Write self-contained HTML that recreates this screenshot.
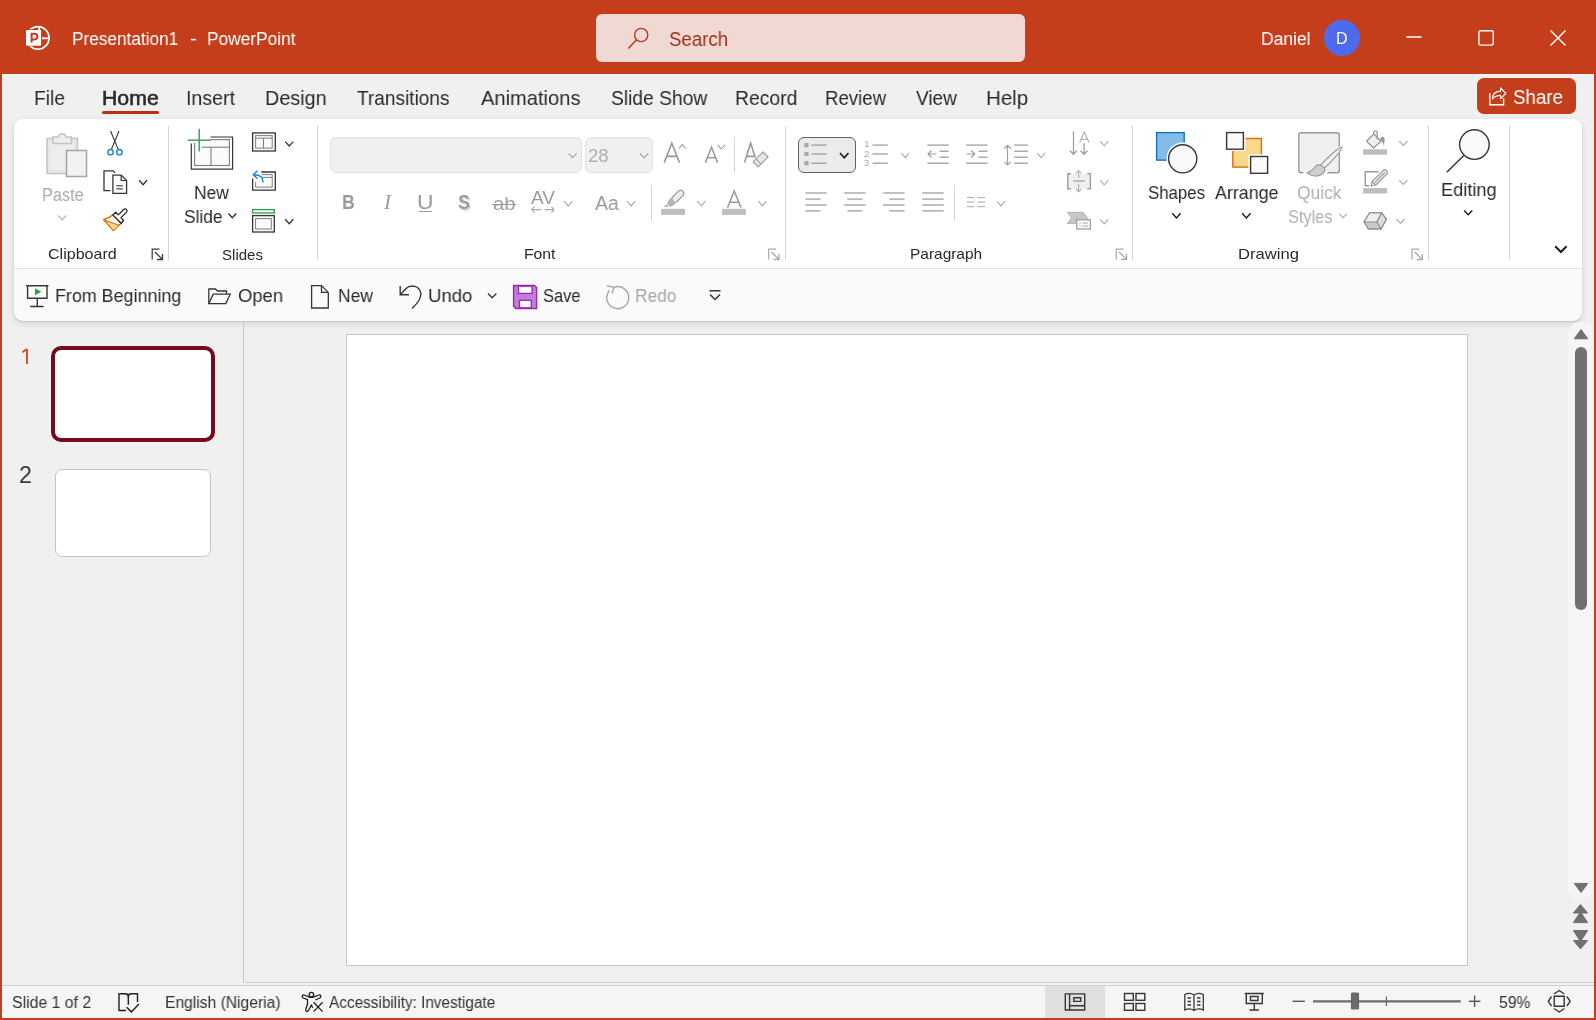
<!DOCTYPE html>
<html><head><meta charset="utf-8"><style>
html,body{margin:0;padding:0}
body{width:1596px;height:1020px;overflow:hidden;position:relative;font-family:"Liberation Sans",sans-serif;background:#f0f0f0}
.t{position:absolute;white-space:nowrap;line-height:1;transform-origin:0 0;will-change:transform}
svg{position:absolute;left:0;top:0}
</style></head><body>
<div style="position:absolute;left:0px;top:0px;width:1596px;height:74px;background:#c43e1c"></div>
<div style="position:absolute;left:0px;top:74px;width:1596px;height:946px;background:#f0f0f0"></div>
<div style="position:absolute;left:2px;top:74px;width:1591px;height:1px;background:#f6f6f6"></div>
<div style="position:absolute;left:14px;top:119px;width:1568px;height:202px;background:#fafafa;border-radius:9px;box-shadow:0 1px 2px rgba(0,0,0,0.14),0 3px 9px rgba(0,0,0,0.10)"></div>
<div style="position:absolute;left:14px;top:119px;width:1568px;height:149px;background:#fff;border-radius:9px 9px 0 0"></div>
<div style="position:absolute;left:14px;top:268px;width:1568px;height:1px;background:#e0e0e0"></div>
<div style="position:absolute;left:243px;top:323px;width:1px;height:660px;background:#c8c8c8"></div>
<div style="position:absolute;left:246px;top:982px;width:1348px;height:1px;background:#c8c8c8"></div>
<div style="position:absolute;left:2px;top:983px;width:1592px;height:2px;background:#f2f2f2"></div>
<div style="position:absolute;left:2px;top:986px;width:1592px;height:32px;background:#f5f5f5"></div>
<div style="position:absolute;left:2px;top:985px;width:1592px;height:1px;background:#d0d0d0"></div>
<div style="position:absolute;left:0px;top:74px;width:2px;height:946px;background:#c43e1c"></div>
<div style="position:absolute;left:1594px;top:74px;width:2px;height:946px;background:#c43e1c"></div>
<div style="position:absolute;left:0px;top:1018px;width:1596px;height:2px;background:#c43e1c"></div>
<div style="position:absolute;left:346px;top:334px;width:1122px;height:632px;background:#fff;box-sizing:border-box;border:1px solid #c6c6c6"></div>
<div style="position:absolute;left:51px;top:346px;width:164px;height:96px;background:#fff;box-sizing:border-box;border:4px solid #750b1c;border-radius:10px"></div>
<div style="position:absolute;left:55px;top:469px;width:156px;height:88px;background:#fff;box-sizing:border-box;border:1px solid #c4c4c4;border-radius:7px"></div>
<div style="position:absolute;left:1568px;top:322px;width:25px;height:578px;background:#f5f5f5;border-radius:12px"></div>
<div style="position:absolute;left:1575px;top:347px;width:12px;height:263px;background:#707070;border-radius:6px"></div>
<div style="position:absolute;left:596px;top:14px;width:429px;height:48px;background:#f0d9d3;border-radius:6px"></div>
<div style="position:absolute;left:1477px;top:78px;width:99px;height:36px;background:#c43e1c;border-radius:7px"></div>
<div style="position:absolute;left:1324px;top:20px;width:36px;height:36px;background:#4f6bed;border-radius:50%"></div>
<div style="position:absolute;left:102px;top:111px;width:57px;height:3px;background:#b7300f;border-radius:2px"></div>
<div style="position:absolute;left:1045px;top:986px;width:60px;height:32px;background:#e0e0e0"></div>
<div style="position:absolute;left:330px;top:137px;width:252px;height:36px;background:#f0f0f0;box-sizing:border-box;border:1px solid #e2e2e2;border-radius:6px"></div>
<div style="position:absolute;left:585px;top:137px;width:68px;height:36px;background:#f0f0f0;box-sizing:border-box;border:1px solid #e2e2e2;border-radius:6px"></div>
<div style="position:absolute;left:798px;top:137px;width:58px;height:36px;background:#ebebeb;box-sizing:border-box;border:1px solid #616161;border-radius:6px"></div>
<div style="position:absolute;left:168px;top:126px;width:1px;height:134px;background:#d4d4d4"></div>
<div style="position:absolute;left:317px;top:126px;width:1px;height:134px;background:#d4d4d4"></div>
<div style="position:absolute;left:785px;top:126px;width:1px;height:134px;background:#d4d4d4"></div>
<div style="position:absolute;left:1132px;top:126px;width:1px;height:134px;background:#d4d4d4"></div>
<div style="position:absolute;left:1428px;top:126px;width:1px;height:134px;background:#d4d4d4"></div>
<div style="position:absolute;left:1509px;top:126px;width:1px;height:134px;background:#d4d4d4"></div>
<div style="position:absolute;left:734px;top:137px;width:1px;height:36px;background:#d4d4d4"></div>
<div style="position:absolute;left:651px;top:185px;width:1px;height:36px;background:#d4d4d4"></div>
<div style="position:absolute;left:954px;top:185px;width:1px;height:36px;background:#d4d4d4"></div>
<svg width="1596" height="1020" viewBox="0 0 1596 1020"><circle cx="37.9" cy="37.9" r="11.2" fill="none" stroke="#fff" stroke-width="1.7"/><rect x="25.3" y="29.3" width="16.6" height="17" fill="#c43e1c"/><line x1="39.2" y1="26.5" x2="39.2" y2="31" stroke="#fff" stroke-width="1.8"/><line x1="42" y1="38.3" x2="49.3" y2="38.3" stroke="#fff" stroke-width="1.8"/><rect x="26" y="30" width="15.1" height="15.7" rx="0.8" fill="#fff"/><path d="M31.6 42.6 V33.8 H34.6 A2.8 2.8 0 0 1 34.6 39.4 H31.6" fill="none" stroke="#c43e1c" stroke-width="2"/><circle cx="641.2" cy="35" r="6.6" fill="none" stroke="#b83b1c" stroke-width="1.4"/><line x1="636.5" y1="39.8" x2="628.3" y2="48.5" stroke="#b83b1c" stroke-width="1.5" stroke-linecap="butt"/><line x1="1406" y1="37" x2="1421.6" y2="37" stroke="#fff" stroke-width="1.5" stroke-linecap="butt"/><rect x="1478.9" y="30.7" width="14.399999999999864" height="14.400000000000002" rx="2" fill="none" stroke="#fff" stroke-width="1.4"/><line x1="1550.5" y1="30.5" x2="1565.5" y2="45.5" stroke="#fff" stroke-width="1.4" stroke-linecap="butt"/><line x1="1565.5" y1="30.5" x2="1550.5" y2="45.5" stroke="#fff" stroke-width="1.4" stroke-linecap="butt"/><path d="M1489.8 93.3 V104.8 H1503.6 V98.2" fill="none" stroke="#fff" stroke-width="1.4"/><path d="M1492.3 98.8 C1492.8 93.5 1496 91.2 1500.6 91.2 V87.9 L1505.8 93.3 L1500.6 98.7 V95.4 C1497 95.4 1494.5 96.5 1492.3 98.8 Z" fill="none" stroke="#fff" stroke-width="1.2" stroke-linejoin="round"/><rect x="47" y="138.5" width="30.5" height="35" fill="#eeeeee" stroke="#c4c4c4" stroke-width="1.6"/><rect x="49.5" y="141" width="25.5" height="30" fill="none" stroke="#e0e0e0" stroke-width="1.2"/><path d="M53 143.5 V137 H58.5 A3.8 3.8 0 0 1 66 137 H71.5 V143.5 Z" fill="#efefef" stroke="#c4c4c4" stroke-width="1.5"/><rect x="66.5" y="150.5" width="20" height="26" fill="#f2f2f2" stroke="#a4a4a4" stroke-width="1.5"/><path d="M58.2 215.5 L62.2 219.8 L66.2 215.5" fill="none" stroke="#b8b8b8" stroke-width="1.2"/><path d="M110.6 131 L118.3 149.6 M119 131 L111.3 149.6" fill="none" stroke="#363636" stroke-width="1.1"/><circle cx="110.5" cy="152.2" r="2.7" fill="none" stroke="#1a86d0" stroke-width="1.4"/><circle cx="119.4" cy="152.2" r="2.7" fill="none" stroke="#1a86d0" stroke-width="1.4"/><path d="M110.5 190.6 H104 V170.9 H113 L115 172.8" fill="none" stroke="#363636" stroke-width="1.3"/><path d="M112.9 193.4 V175.1 H121.2 L126.6 180.5 V193.4 Z" fill="#fafafa" stroke="#363636" stroke-width="1.3"/><path d="M121.2 175.1 V180.5 H126.6" fill="none" stroke="#363636" stroke-width="1.2"/><line x1="116.4" y1="185.8" x2="122.8" y2="185.8" stroke="#363636" stroke-width="1.1" stroke-linecap="butt"/><line x1="116.4" y1="188.8" x2="122.8" y2="188.8" stroke="#363636" stroke-width="1.1" stroke-linecap="butt"/><path d="M139.2 180.3 L143.1 184.6 L147 180.3" fill="none" stroke="#363636" stroke-width="1.4"/><path d="M103.6 219.5 C107.2 218.6 110.5 217 112.9 214.9 L121.1 223.2 L113.4 230.6 Z" fill="#fff" stroke="#e06c00" stroke-width="1.4" stroke-linejoin="round"/><path d="M106.5 221.4 L118.6 225.6 L113.6 229.8 Z" fill="#f8d98b"/><path d="M104.2 220 L119.6 225.5" fill="none" stroke="#e06c00" stroke-width="1.3"/><path d="M112.9 214.9 L115.6 212.3 L118.3 214.9 L123.6 209.5 C124.6 208.6 125.8 208.8 126.5 209.6 C127.2 210.4 127.3 211.5 126.4 212.4 L121 217.6 L123.6 220.5 L121.1 223.2 Z" fill="#fff" stroke="#262626" stroke-width="1.3" stroke-linejoin="round"/><path d="M152.2 259.5 V249.2 H159.5" fill="none" stroke="#3a3a3a" stroke-width="1.2"/><path d="M155.0 252.0 L162.5 259.5 M162.5 254.0 V259.5 H157.0" fill="none" stroke="#3a3a3a" stroke-width="1.3"/><rect x="194.6" y="139.6" width="34.8" height="25.9" fill="#fafafa" stroke="#7d7d7d" stroke-width="1.1"/><path d="M210.5 137 H232.6 V169.1 H191.3 V143.4" fill="none" stroke="#363636" stroke-width="1.2"/><line x1="202" y1="147.2" x2="229.4" y2="147.2" stroke="#7d7d7d" stroke-width="1.1" stroke-linecap="butt"/><line x1="211" y1="147.2" x2="211" y2="165.5" stroke="#7d7d7d" stroke-width="1.1" stroke-linecap="butt"/><rect x="187" y="127" width="23" height="16" fill="#fff"/><rect x="196.8" y="142" width="4.8" height="11" fill="#fff"/><line x1="199.2" y1="128.8" x2="199.2" y2="151.6" stroke="#2f9e4f" stroke-width="1.4" stroke-linecap="butt"/><line x1="187.9" y1="140.2" x2="210.7" y2="140.2" stroke="#2f9e4f" stroke-width="1.4" stroke-linecap="butt"/><path d="M228.4 213.5 L232.3 217.8 L236.2 213.5" fill="none" stroke="#363636" stroke-width="1.4"/><rect x="252.6" y="132.9" width="22.700000000000017" height="18.099999999999994" rx="0" fill="#fafafa" stroke="#363636" stroke-width="1.3"/><rect x="255.6" y="135.6" width="16.599999999999994" height="12.5" rx="0" fill="none" stroke="#7d7d7d" stroke-width="1.0"/><line x1="255.6" y1="138.2" x2="272.2" y2="138.2" stroke="#7d7d7d" stroke-width="1.0" stroke-linecap="butt"/><line x1="263.5" y1="138.2" x2="263.5" y2="148.1" stroke="#7d7d7d" stroke-width="1.0" stroke-linecap="butt"/><path d="M285.2 141.6 L289.25 146 L293.3 141.6" fill="none" stroke="#363636" stroke-width="1.4"/><path d="M261.2 172 H275.3 V190.2 H252.6 V178.5" fill="#fafafa" stroke="#363636" stroke-width="1.3"/><path d="M262 174.6 H272.2 V187.1 H255.6 V182" fill="none" stroke="#7d7d7d" stroke-width="1.0"/><line x1="262" y1="177.4" x2="272.2" y2="177.4" stroke="#7d7d7d" stroke-width="1.0" stroke-linecap="butt"/><path d="M262.8 182.5 C263.5 177 260 174.7 253.5 174.7 M257.5 170.7 L253.3 174.7 L257.5 178.7" fill="none" stroke="#1a86d0" stroke-width="1.4"/><rect x="252.6" y="209.6" width="21.700000000000017" height="3.4000000000000057" rx="0" fill="#fff" stroke="#2f9e4f" stroke-width="1.3"/><rect x="252.6" y="215.6" width="21.700000000000017" height="16.400000000000006" rx="0" fill="#fafafa" stroke="#363636" stroke-width="1.3"/><rect x="255.6" y="218.6" width="15.700000000000017" height="10.400000000000006" rx="0" fill="none" stroke="#7d7d7d" stroke-width="1.0"/><path d="M285.2 219.2 L289.25 223.6 L293.3 219.2" fill="none" stroke="#363636" stroke-width="1.4"/><path d="M568.6 153.4 L572.6 157.6 L576.6 153.4" fill="none" stroke="#a0a0a0" stroke-width="1.1"/><path d="M640 153.5 L644.15 157.8 L648.3 153.5" fill="none" stroke="#a0a0a0" stroke-width="1.1"/><path d="M664.2 162.6 L671.85 143.2 L679.5 162.6 M666.648 156.392 H677.052" fill="none" stroke="#9a9a9a" stroke-width="1.6"/><path d="M679 148.5 L682.35 144.7 L685.7 148.5" fill="none" stroke="#9a9a9a" stroke-width="1.1"/><path d="M705.4 162.6 L711.5 147.3 L717.6 162.6 M707.352 157.704 H715.648" fill="none" stroke="#9a9a9a" stroke-width="1.6"/><path d="M717.6 144.9 L721.3 148.8 L725 144.9" fill="none" stroke="#9a9a9a" stroke-width="1.1"/><path d="M744.5 162.6 L750.65 143.2 L756.8 162.6 M746.468 156.392 H754.832" fill="none" stroke="#9a9a9a" stroke-width="1.6"/><g transform="translate(760.6 159.3) rotate(-45)"><rect x="-8.5" y="-5" width="17" height="10" fill="#fff"/><rect x="-7" y="-3.6" width="14" height="7.2" fill="#e6e6e6" stroke="#a0a0a0" stroke-width="1.2"/><line x1="-3" y1="-3.6" x2="-3" y2="3.6" stroke="#a0a0a0" stroke-width="1.2"/></g><path d="M531.5 209.6 H541 M531.5 209.6 L534.5 206.6 M531.5 209.6 L534.5 212.6 M544.5 209.6 H554.3 M554.3 209.6 L551.3 206.6 M554.3 209.6 L551.3 212.6" fill="none" stroke="#a8a8a8" stroke-width="1.2"/><path d="M564 201 L568.25 205.8 L572.5 201" fill="none" stroke="#a0a0a0" stroke-width="1.1"/><path d="M627 201 L631.2 205.8 L635.4 201" fill="none" stroke="#a0a0a0" stroke-width="1.1"/><rect x="661.2" y="208.8" width="23.8" height="6.1" fill="#bdbdbd"/><g transform="translate(675 199) rotate(-45)"><rect x="-3" y="-3.2" width="14" height="6.4" rx="3" fill="#ececec" stroke="#9a9a9a" stroke-width="1.2"/><path d="M-3 -3.2 L-8 -2 L-8 2 L-3 3.2" fill="#b8b8b8" stroke="#9a9a9a" stroke-width="1"/></g><path d="M663 207.5 L667 204 L669.5 206.5 Z" fill="#b8b8b8"/><path d="M697 201 L701.3 205.8 L705.6 201" fill="none" stroke="#a0a0a0" stroke-width="1.1"/><path d="M727.5 207.6 L734.25 191 L741 207.6 M729.66 202.288 H738.84" fill="none" stroke="#9a9a9a" stroke-width="1.5"/><rect x="722.1" y="208.8" width="23.8" height="6.1" fill="#bdbdbd"/><path d="M758.2 201 L762.35 205.8 L766.5 201" fill="none" stroke="#a0a0a0" stroke-width="1.1"/><path d="M768.7 259.5 V249.2 H776" fill="none" stroke="#a8a8a8" stroke-width="1.2"/><path d="M771.5 252.0 L779 259.5 M779 254.0 V259.5 H773.5" fill="none" stroke="#a8a8a8" stroke-width="1.3"/><rect x="804.3" y="143.0" width="4.3" height="4.3" fill="#a8a8a8"/><line x1="811.3" y1="145.1" x2="826.6" y2="145.1" stroke="#9e9e9e" stroke-width="1.3" stroke-linecap="butt"/><rect x="804.3" y="151.9" width="4.3" height="4.3" fill="#a8a8a8"/><line x1="811.3" y1="154" x2="826.6" y2="154" stroke="#9e9e9e" stroke-width="1.3" stroke-linecap="butt"/><rect x="804.3" y="161.1" width="4.3" height="4.3" fill="#a8a8a8"/><line x1="811.3" y1="163.2" x2="826.6" y2="163.2" stroke="#9e9e9e" stroke-width="1.3" stroke-linecap="butt"/><path d="M840 153 L844.25 157.8 L848.5 153" fill="none" stroke="#1a1a1a" stroke-width="1.6"/><line x1="872.5" y1="145.1" x2="887.7" y2="145.1" stroke="#9e9e9e" stroke-width="1.3" stroke-linecap="butt"/><line x1="872.5" y1="154" x2="887.7" y2="154" stroke="#9e9e9e" stroke-width="1.3" stroke-linecap="butt"/><line x1="872.5" y1="163.2" x2="887.7" y2="163.2" stroke="#9e9e9e" stroke-width="1.3" stroke-linecap="butt"/><path d="M901.2 153 L905.2 157.6 L909.2 153" fill="none" stroke="#a8a8a8" stroke-width="1.1"/><line x1="927.3" y1="145.1" x2="948.7" y2="145.1" stroke="#9e9e9e" stroke-width="1.3" stroke-linecap="butt"/><line x1="927.3" y1="163.2" x2="948.7" y2="163.2" stroke="#9e9e9e" stroke-width="1.3" stroke-linecap="butt"/><line x1="939.6" y1="151.2" x2="948.7" y2="151.2" stroke="#9e9e9e" stroke-width="1.3" stroke-linecap="butt"/><line x1="939.6" y1="157.2" x2="948.7" y2="157.2" stroke="#9e9e9e" stroke-width="1.3" stroke-linecap="butt"/><line x1="966.2" y1="145.1" x2="987.5" y2="145.1" stroke="#9e9e9e" stroke-width="1.3" stroke-linecap="butt"/><line x1="966.2" y1="163.2" x2="987.5" y2="163.2" stroke="#9e9e9e" stroke-width="1.3" stroke-linecap="butt"/><line x1="978.4" y1="151.2" x2="987.5" y2="151.2" stroke="#9e9e9e" stroke-width="1.3" stroke-linecap="butt"/><line x1="978.4" y1="157.2" x2="987.5" y2="157.2" stroke="#9e9e9e" stroke-width="1.3" stroke-linecap="butt"/><path d="M936.4 154 H928 M931.5 150.5 L928 154 L931.5 157.5" fill="none" stroke="#9e9e9e" stroke-width="1.2"/><path d="M966.5 154 H974.8 M971.3 150.5 L974.8 154 L971.3 157.5" fill="none" stroke="#9e9e9e" stroke-width="1.2"/><path d="M1007.5 145.3 V165 M1004.3 148.5 L1007.5 145.3 L1010.7 148.5 M1004.3 161.8 L1007.5 165 L1010.7 161.8" fill="none" stroke="#9e9e9e" stroke-width="1.2"/><line x1="1014.2" y1="145.1" x2="1027.9" y2="145.1" stroke="#9e9e9e" stroke-width="1.3" stroke-linecap="butt"/><line x1="1014.2" y1="151.2" x2="1027.9" y2="151.2" stroke="#9e9e9e" stroke-width="1.3" stroke-linecap="butt"/><line x1="1014.2" y1="157.2" x2="1027.9" y2="157.2" stroke="#9e9e9e" stroke-width="1.3" stroke-linecap="butt"/><line x1="1014.2" y1="163.2" x2="1027.9" y2="163.2" stroke="#9e9e9e" stroke-width="1.3" stroke-linecap="butt"/><path d="M1037 153 L1041.0 157.6 L1045 153" fill="none" stroke="#a8a8a8" stroke-width="1.1"/><line x1="805.4" y1="193" x2="826.6" y2="193" stroke="#9e9e9e" stroke-width="1.3" stroke-linecap="butt"/><line x1="844.2" y1="193" x2="865.6" y2="193" stroke="#9e9e9e" stroke-width="1.3" stroke-linecap="butt"/><line x1="883.2" y1="193" x2="904.6" y2="193" stroke="#9e9e9e" stroke-width="1.3" stroke-linecap="butt"/><line x1="922.3" y1="193" x2="943.6" y2="193" stroke="#9e9e9e" stroke-width="1.3" stroke-linecap="butt"/><line x1="805.4" y1="199.1" x2="820.6" y2="199.1" stroke="#9e9e9e" stroke-width="1.3" stroke-linecap="butt"/><line x1="847.4" y1="199.1" x2="862.4" y2="199.1" stroke="#9e9e9e" stroke-width="1.3" stroke-linecap="butt"/><line x1="889.2" y1="199.1" x2="904.6" y2="199.1" stroke="#9e9e9e" stroke-width="1.3" stroke-linecap="butt"/><line x1="922.3" y1="199.1" x2="943.6" y2="199.1" stroke="#9e9e9e" stroke-width="1.3" stroke-linecap="butt"/><line x1="805.4" y1="205" x2="826.6" y2="205" stroke="#9e9e9e" stroke-width="1.3" stroke-linecap="butt"/><line x1="844.2" y1="205" x2="865.6" y2="205" stroke="#9e9e9e" stroke-width="1.3" stroke-linecap="butt"/><line x1="883.2" y1="205" x2="904.6" y2="205" stroke="#9e9e9e" stroke-width="1.3" stroke-linecap="butt"/><line x1="922.3" y1="205" x2="943.6" y2="205" stroke="#9e9e9e" stroke-width="1.3" stroke-linecap="butt"/><line x1="805.4" y1="210.9" x2="820.6" y2="210.9" stroke="#9e9e9e" stroke-width="1.3" stroke-linecap="butt"/><line x1="847.4" y1="210.9" x2="862.4" y2="210.9" stroke="#9e9e9e" stroke-width="1.3" stroke-linecap="butt"/><line x1="889.2" y1="210.9" x2="904.6" y2="210.9" stroke="#9e9e9e" stroke-width="1.3" stroke-linecap="butt"/><line x1="922.3" y1="210.9" x2="943.6" y2="210.9" stroke="#9e9e9e" stroke-width="1.3" stroke-linecap="butt"/><line x1="967" y1="197.5" x2="974.2" y2="197.5" stroke="#b5b5b5" stroke-width="1.2" stroke-linecap="butt"/><line x1="977.4" y1="197.5" x2="985.1" y2="197.5" stroke="#b5b5b5" stroke-width="1.2" stroke-linecap="butt"/><line x1="967" y1="202" x2="974.2" y2="202" stroke="#b5b5b5" stroke-width="1.2" stroke-linecap="butt"/><line x1="977.4" y1="202" x2="985.1" y2="202" stroke="#b5b5b5" stroke-width="1.2" stroke-linecap="butt"/><line x1="967" y1="206.6" x2="974.2" y2="206.6" stroke="#b5b5b5" stroke-width="1.2" stroke-linecap="butt"/><line x1="977.4" y1="206.6" x2="985.1" y2="206.6" stroke="#b5b5b5" stroke-width="1.2" stroke-linecap="butt"/><path d="M997 201.2 L1001.0 205.8 L1005 201.2" fill="none" stroke="#a8a8a8" stroke-width="1.1"/><path d="M1073.5 131.2 V154.3 M1070 150.8 L1073.5 154.3 L1077 150.8 M1084.1 143.2 V154.3 M1080.6 150.8 L1084.1 154.3 L1087.6 150.8" fill="none" stroke="#9e9e9e" stroke-width="1.3"/><path d="M1079.6 142.6 L1084.3 132 L1089 142.6 M1081.1039999999998 139.208 H1087.496" fill="none" stroke="#a8a8a8" stroke-width="1.1"/><path d="M1100.3 141.4 L1104.25 145.8 L1108.2 141.4" fill="none" stroke="#a8a8a8" stroke-width="1.1"/><rect x="1067.8" y="173.8" width="22.6" height="15" fill="#efefef"/><path d="M1071 173.8 H1067.8 V188.7 H1071 M1087.2 173.8 H1090.4 V188.7 H1087.2" fill="none" stroke="#9e9e9e" stroke-width="1.4"/><line x1="1073.1" y1="181" x2="1084.9" y2="181" stroke="#9e9e9e" stroke-width="1.2" stroke-linecap="butt"/><path d="M1078.6 170.5 V178 M1075.8 173.3 L1078.6 170.5 L1081.4 173.3 M1078.6 184 V191.7 M1075.8 188.9 L1078.6 191.7 L1081.4 188.9" fill="none" stroke="#b0b0b0" stroke-width="1.1"/><path d="M1100.3 180.3 L1104.25 185 L1108.2 180.3" fill="none" stroke="#a8a8a8" stroke-width="1.1"/><path d="M1067.3 212.3 H1083 L1088.6 219.5 H1076.3 V223.4 H1067.3 L1071.5 217.8 Z" fill="#c6c6c6" stroke="#a8a8a8" stroke-width="0.8"/><rect x="1076.8" y="219.8" width="13.600000000000136" height="9.199999999999989" rx="0" fill="#fafafa" stroke="#a0a0a0" stroke-width="1.3"/><line x1="1079.5" y1="223" x2="1080.8" y2="223" stroke="#a8a8a8" stroke-width="1.0" stroke-linecap="butt"/><line x1="1082.5" y1="223" x2="1088" y2="223" stroke="#a8a8a8" stroke-width="1.0" stroke-linecap="butt"/><line x1="1079.5" y1="226" x2="1080.8" y2="226" stroke="#a8a8a8" stroke-width="1.0" stroke-linecap="butt"/><line x1="1082.5" y1="226" x2="1088" y2="226" stroke="#a8a8a8" stroke-width="1.0" stroke-linecap="butt"/><path d="M1100.3 219.6 L1104.25 223.8 L1108.2 219.6" fill="none" stroke="#a8a8a8" stroke-width="1.1"/><path d="M1116.2 259.4 V249.1 H1123.5" fill="none" stroke="#a8a8a8" stroke-width="1.2"/><path d="M1119.0 251.9 L1126.5 259.4 M1126.5 253.9 V259.4 H1121.0" fill="none" stroke="#a8a8a8" stroke-width="1.3"/><path d="M1156.6 132.6 H1184.2 V146 A14.5 14.5 0 0 0 1170 160.2 H1156.6 Z" fill="#83bbe8" stroke="#0f6cbd" stroke-width="1.3"/><circle cx="1182.7" cy="158.8" r="16.2" fill="#fff"/><circle cx="1182.7" cy="158.8" r="14.1" fill="#fafafa" stroke="#363636" stroke-width="1.4"/><path d="M1172.3 213.3 L1176.4499999999998 218 L1180.6 213.3" fill="none" stroke="#1a1a1a" stroke-width="1.4"/><rect x="1232.8" y="138.5" width="28.600000000000136" height="28.599999999999994" rx="0" fill="#f8d98b" stroke="#e06c00" stroke-width="1.4"/><rect x="1224.5" y="130.5" width="21" height="20.5" fill="#fff"/><rect x="1248.5" y="154.4" width="21" height="21" fill="#fff"/><rect x="1226.6" y="132.6" width="16.800000000000182" height="16.599999999999994" rx="0" fill="#fafafa" stroke="#363636" stroke-width="1.4"/><rect x="1250.6" y="156.5" width="17.0" height="16.80000000000001" rx="0" fill="#fafafa" stroke="#363636" stroke-width="1.4"/><path d="M1242.2 213.3 L1246.4 218 L1250.6 213.3" fill="none" stroke="#1a1a1a" stroke-width="1.4"/><rect x="1298.8" y="132.7" width="40.5" height="40.10000000000002" rx="2.5" fill="#f0f0f0" stroke="#9a9a9a" stroke-width="1.4"/><path d="M1343 146 L1321 168 M1326 171 C1322 178 1312 178.5 1304 172" fill="none" stroke="#fff" stroke-width="4.5"/><path d="M1341.6 147.3 C1343.2 148.6 1331.5 161.8 1324.3 168.3 L1320.6 165.2 C1327.2 158 1340 146 1341.6 147.3 Z" fill="#f2f2f2" stroke="#9a9a9a" stroke-width="1.2"/><path d="M1320.6 165.2 C1324.2 166.3 1325.6 168.8 1324.2 171.6 C1321.2 177 1313 177.6 1307 172.6 C1311.8 172 1313.8 168.2 1315.8 166.2 C1317.4 164.6 1319 164.7 1320.6 165.2 Z" fill="#cfcfcf" stroke="#9a9a9a" stroke-width="1.2"/><path d="M1339.2 213.7 L1343.1 217.6 L1347 213.7" fill="none" stroke="#b0b0b0" stroke-width="1.1"/><path d="M1366.5 141.2 L1373.8 134 L1381 141.2 L1373.6 148 Z" fill="#efefef" stroke="#9a9a9a" stroke-width="1.3" stroke-linejoin="round"/><path d="M1373.8 135 V132.6 A1.7 1.7 0 0 1 1377.2 132.6 V139.4" fill="none" stroke="#9a9a9a" stroke-width="1.3"/><path d="M1380.2 139.6 C1380 137.2 1382.4 136 1384 137.4 C1385.2 138.8 1384.6 142 1383.8 145.6 C1383 142.2 1381.6 141.4 1380.2 139.6 Z" fill="#9a9a9a"/><rect x="1363.1" y="149.3" width="23.9" height="5.4" fill="#bdbdbd"/><path d="M1399.2 141.2 L1403.35 145.5 L1407.5 141.2" fill="none" stroke="#a8a8a8" stroke-width="1.1"/><path d="M1378.5 171.8 H1365.3 V185.8 H1369.3" fill="none" stroke="#9a9a9a" stroke-width="1.4"/><g transform="translate(1378.6 178.6) rotate(-45)"><path d="M-10.5 0 L-6.5 -2.5 H8.8 A2.5 2.5 0 0 1 8.8 2.5 H-6.5 Z M-6.5 -2.5 V2.5 M-5 0 H9" fill="#f0f0f0" stroke="#9a9a9a" stroke-width="1.2" stroke-linejoin="round"/></g><rect x="1363.1" y="188.1" width="23.9" height="5.4" fill="#bdbdbd"/><path d="M1399.2 180.2 L1403.35 184.5 L1407.5 180.2" fill="none" stroke="#a8a8a8" stroke-width="1.1"/><path d="M1364 222 L1369.5 213 H1381.7 L1386.4 219.3 L1381 229 H1368.3 Z" fill="#c9c9c9" stroke="#8e8e8e" stroke-width="1.3" stroke-linejoin="round"/><path d="M1369.5 213 H1381.7 L1377 222 H1364 Z" fill="#eeeeee" stroke="#8e8e8e" stroke-width="1.2" stroke-linejoin="round"/><path d="M1381.7 213 L1386.4 219.3 L1381 229 L1377 222 Z" fill="#dddddd" stroke="#8e8e8e" stroke-width="1.2" stroke-linejoin="round"/><path d="M1396.3 219.2 L1400.4499999999998 223.5 L1404.6 219.2" fill="none" stroke="#a8a8a8" stroke-width="1.1"/><path d="M1412.0 259.5 V249.2 H1419.3" fill="none" stroke="#a8a8a8" stroke-width="1.2"/><path d="M1414.8 252.0 L1422.3 259.5 M1422.3 254.0 V259.5 H1416.8" fill="none" stroke="#a8a8a8" stroke-width="1.3"/><circle cx="1474.4" cy="144.6" r="14.8" fill="#fafafa" stroke="#363636" stroke-width="1.4"/><line x1="1463.8" y1="155.5" x2="1446.8" y2="172.3" stroke="#363636" stroke-width="1.5" stroke-linecap="butt"/><path d="M1464.1 210.6 L1468.1999999999998 214.8 L1472.3 210.6" fill="none" stroke="#1a1a1a" stroke-width="1.4"/><path d="M1555.2 246.2 L1560.9 252 L1566.6 246.2" fill="none" stroke="#1a1a1a" stroke-width="2.0"/><path d="M26.1 285.7 H48.4 M27.6 285.7 V298.2 H47 V285.7 M37.3 298.2 V306.5 M30.2 306.5 H43.7" fill="none" stroke="#363636" stroke-width="1.4"/><path d="M35 288.3 L41.4 291.8 L35 295.2 Z" fill="#2f9e4f"/><path d="M208.8 303.6 V289 H215.5 L217.5 291 H226.5 V294" fill="none" stroke="#363636" stroke-width="1.3"/><path d="M208.8 303.6 L213.2 294.2 H230.2 L225.8 303.6 Z" fill="none" stroke="#363636" stroke-width="1.3"/><path d="M311.6 285.6 H321.5 L328.3 292.4 V308 H311.6 Z M321.5 285.6 V292.4 H328.3" fill="none" stroke="#363636" stroke-width="1.3"/><path d="M400.2 286 V294.8 H409 M400.5 294.5 L406 288.5 C411 284 419.5 286 420.8 293 C421.8 298.5 418 303 412 308.5" fill="none" stroke="#363636" stroke-width="1.4"/><path d="M488 293.5 L492.2 297.8 L496.4 293.5" fill="none" stroke="#363636" stroke-width="1.4"/><path d="M513.6 285.5 H534.5 L536.6 287.6 V308.5 H515.8 L513.6 306.3 Z" fill="#c27ddb" stroke="#9c27b0" stroke-width="1.4"/><rect x="518.5" y="286.2" width="13.5" height="7.2" fill="#fff" stroke="#9c27b0" stroke-width="1.3"/><rect x="519.5" y="300.3" width="11.8" height="7.5" fill="#fff" stroke="#9c27b0" stroke-width="1.3"/><path d="M609.4 290.5 A11 11 0 1 0 614 287.3 M606.8 285.8 L614.2 287.3 L612 293.5" fill="none" stroke="#a8a8a8" stroke-width="1.4"/><path d="M709.5 290.8 H720.5 M710 294.5 L715 299.5 L720 294.5" fill="none" stroke="#363636" stroke-width="1.5"/><path d="M27 364 V349 M22.4 352.2 L27 349" fill="none" stroke="#d64a24" stroke-width="1.9"/><path d="M1581 329.5 L1587.8 338.8 H1574.2 Z" fill="#707070" stroke="#707070" stroke-width="1" stroke-linejoin="round"/><path d="M1581 892.6 L1587.8 883.4 H1574.2 Z" fill="#707070" stroke="#707070" stroke-width="1" stroke-linejoin="round"/><path d="M1580.5 904.5 L1587.6 913 H1573.4 Z M1580.5 911.8 L1587.6 922.6 H1573.4 Z" fill="#707070" stroke="#707070" stroke-width="1" stroke-linejoin="round"/><path d="M1580.5 949 L1587.6 940.5 H1573.4 Z M1580.5 941.6 L1587.6 930.5 H1573.4 Z" fill="#707070" stroke="#707070" stroke-width="1" stroke-linejoin="round"/><path d="M126 1010.5 H119 V993.8 H125.5 C127 993.8 128.3 995 128.3 997 V1004.8 M128.3 997 C128.3 995 129.5 993.8 131 993.8 H137.5 V1002" fill="none" stroke="#1f1f1f" stroke-width="1.4" stroke-linejoin="round"/><path d="M126.6 1007.2 L131.4 1011.9 L138.9 1003.9" fill="none" stroke="#1f1f1f" stroke-width="1.5"/><circle cx="311.4" cy="994.6" r="2.3" fill="none" stroke="#1f1f1f" stroke-width="1.3"/><path d="M315.3 1000 L319.8 998 C321.6 997.2 321 994.3 318.8 995 L314 996.8 C312.3 997.5 310.5 997.5 308.8 996.8 L304.2 995 C302 994.3 301.5 997.3 303.3 998 L307.5 999.7 V1004 L305.7 1009.5 C305.2 1011.6 307.8 1012.2 308.5 1010.2 L311.4 1005 L312.7 1007.8" fill="none" stroke="#1f1f1f" stroke-width="1.3" stroke-linejoin="round"/><path d="M313.6 1002.2 L322.6 1011.6 M322.6 1002.2 L313.6 1011.6" fill="none" stroke="#1f1f1f" stroke-width="1.3"/><path d="M1065.3 993.9 H1084.7 V1010 H1065.3 Z M1069.6 993.9 V1010 M1069.6 1005.7 H1084.7 M1073.8 997.8 H1080.7 V1001.4 H1073.8 Z" fill="none" stroke="#363636" stroke-width="1.4"/><rect x="1124.5" y="993.5" width="8.799999999999955" height="6.7999999999999545" rx="0" fill="none" stroke="#363636" stroke-width="1.4"/><rect x="1136" y="993.5" width="8.799999999999955" height="6.7999999999999545" rx="0" fill="none" stroke="#363636" stroke-width="1.4"/><rect x="1124.5" y="1003.5" width="8.799999999999955" height="6.7999999999999545" rx="0" fill="none" stroke="#363636" stroke-width="1.4"/><rect x="1136" y="1003.5" width="8.799999999999955" height="6.7999999999999545" rx="0" fill="none" stroke="#363636" stroke-width="1.4"/><path d="M1184.8 994.5 C1188 993 1191 993 1194 995 C1197 993 1200 993 1203.3 994.5 V1010 C1200 1008.5 1197 1008.5 1194 1010.5 C1191 1008.5 1188 1008.5 1184.8 1010 Z M1194 995 V1010.5 M1187.5 998 H1191 M1187.5 1001.5 H1191 M1187.5 1005 H1191 M1197 998 H1200.5 M1197 1001.5 H1200.5 M1197 1005 H1200.5" fill="none" stroke="#363636" stroke-width="1.3"/><path d="M1244.8 993.5 H1263.8 M1246.3 993.5 V1003.5 H1262.3 V993.5 M1254.3 1003.5 V1010 M1249.5 1010 H1259 M1250.5 996.5 H1258 V1000.5 H1250.5 Z" fill="none" stroke="#363636" stroke-width="1.4"/><line x1="1292.5" y1="1001.3" x2="1304.8" y2="1001.3" stroke="#555" stroke-width="1.4" stroke-linecap="butt"/><line x1="1313" y1="1001.3" x2="1460.8" y2="1001.3" stroke="#6a6a6a" stroke-width="2.2" stroke-linecap="butt"/><rect x="1350.9" y="992.6" width="8.2" height="17" rx="1.5" fill="#6a6a6a"/><line x1="1386.4" y1="996.5" x2="1386.4" y2="1006" stroke="#6a6a6a" stroke-width="1.3" stroke-linecap="butt"/><line x1="1468.8" y1="1001.3" x2="1480.4" y2="1001.3" stroke="#555" stroke-width="1.4" stroke-linecap="butt"/><line x1="1474.6" y1="995.5" x2="1474.6" y2="1007" stroke="#555" stroke-width="1.4" stroke-linecap="butt"/><path d="M1554 994 L1559.2 990.5 L1564.4 994 M1554 1008.5 L1559.2 1012 L1564.4 1008.5 M1551.5 996.5 L1548.3 1001.3 L1551.5 1006 M1566.9 996.5 L1570.1 1001.3 L1566.9 1006 M1554.2 996.3 H1564.2 V1006.3 H1554.2 Z" fill="none" stroke="#363636" stroke-width="1.4"/></svg>
<div class="t" style="left:71.92px;top:30.00px;font-size:18px;color:#ffffff;font-weight:400;transform:scaleX(0.9567);">Presentation1</div>
<div class="t" style="left:190.04px;top:30.00px;font-size:18px;color:#ffffff;font-weight:400;transform:scaleX(1.1791);">-</div>
<div class="t" style="left:206.61px;top:30.00px;font-size:18px;color:#ffffff;font-weight:400;transform:scaleX(0.9619);">PowerPoint</div>
<div class="t" style="left:668.76px;top:29.00px;font-size:20px;color:#a2301a;font-weight:400;transform:scaleX(0.9329);">Search</div>
<div class="t" style="left:1260.60px;top:30.00px;font-size:18px;color:#ffffff;font-weight:400;transform:scaleX(0.9707);">Daniel</div>
<div class="t" style="left:1335.76px;top:31.00px;font-size:16px;color:#ffffff;font-weight:400;transform:scaleX(0.9664);">D</div>
<div class="t" style="left:33.76px;top:87.00px;font-size:21px;color:#2a2a2a;font-weight:400;transform:scaleX(0.9139);">File</div>
<div class="t" style="left:101.50px;top:87.00px;font-size:21px;color:#2a2a2a;font-weight:400;transform:scaleX(1.0124);-webkit-text-stroke:0.55px #262626">Home</div>
<div class="t" style="left:185.64px;top:87.00px;font-size:21px;color:#2a2a2a;font-weight:400;transform:scaleX(0.9326);">Insert</div>
<div class="t" style="left:265.22px;top:87.00px;font-size:21px;color:#2a2a2a;font-weight:400;transform:scaleX(0.9427);">Design</div>
<div class="t" style="left:357.22px;top:87.00px;font-size:21px;color:#2a2a2a;font-weight:400;transform:scaleX(0.9067);">Transitions</div>
<div class="t" style="left:481.30px;top:87.00px;font-size:21px;color:#2a2a2a;font-weight:400;transform:scaleX(0.9572);">Animations</div>
<div class="t" style="left:610.73px;top:87.00px;font-size:21px;color:#2a2a2a;font-weight:400;transform:scaleX(0.9159);">Slide Show</div>
<div class="t" style="left:734.85px;top:87.00px;font-size:21px;color:#2a2a2a;font-weight:400;transform:scaleX(0.9215);">Record</div>
<div class="t" style="left:825.21px;top:87.00px;font-size:21px;color:#2a2a2a;font-weight:400;transform:scaleX(0.8869);">Review</div>
<div class="t" style="left:916.21px;top:87.00px;font-size:21px;color:#2a2a2a;font-weight:400;transform:scaleX(0.9035);">View</div>
<div class="t" style="left:985.66px;top:87.00px;font-size:21px;color:#2a2a2a;font-weight:400;transform:scaleX(0.9770);">Help</div>
<div class="t" style="left:1512.86px;top:87.00px;font-size:20px;color:#ffffff;font-weight:400;transform:scaleX(0.9359);">Share</div>
<div class="t" style="left:42.00px;top:186.00px;font-size:18px;color:#ababab;font-weight:400;transform:scaleX(0.9053);">Paste</div>
<div class="t" style="left:194.01px;top:184.00px;font-size:18px;color:#2a2a2a;font-weight:400;transform:scaleX(0.9668);">New</div>
<div class="t" style="left:184.02px;top:208.00px;font-size:18px;color:#2a2a2a;font-weight:400;transform:scaleX(0.9628);">Slide</div>
<div class="t" style="left:47.70px;top:246.00px;font-size:15px;color:#2a2a2a;font-weight:400;transform:scaleX(1.0708);">Clipboard</div>
<div class="t" style="left:221.52px;top:247.00px;font-size:15px;color:#2a2a2a;font-weight:400;transform:scaleX(1.0032);">Slides</div>
<div class="t" style="left:523.74px;top:246.00px;font-size:15px;color:#2a2a2a;font-weight:400;transform:scaleX(1.0479);">Font</div>
<div class="t" style="left:910.06px;top:246.00px;font-size:15px;color:#2a2a2a;font-weight:400;transform:scaleX(1.0298);">Paragraph</div>
<div class="t" style="left:1238.17px;top:246.00px;font-size:15px;color:#2a2a2a;font-weight:400;transform:scaleX(1.1061);">Drawing</div>
<div class="t" style="left:587.67px;top:147.00px;font-size:18px;color:#b0b0b0;font-weight:400;transform:scaleX(1.0349);">28</div>
<div class="t" style="left:341.85px;top:191.00px;font-size:21px;color:#9a9a9a;font-weight:700;transform:scaleX(0.8431);">B</div>
<div class="t" style="left:416.89px;top:192.00px;font-size:20px;color:#9a9a9a;font-weight:400;transform:scaleX(1.1404);">U</div>
<div class="t" style="left:458.46px;top:191.00px;font-size:21px;color:#9a9a9a;font-weight:700;transform:scaleX(0.8571);text-shadow:1.5px 1.5px 0 #dcdcdc">S</div>
<div class="t" style="left:492.68px;top:194.00px;font-size:19px;color:#a0a0a0;font-weight:400;transform:scaleX(1.0731);">ab</div>
<div style="position:absolute;left:492px;top:204px;width:24px;height:1.3px;background:#9a9a9a"></div>
<div style="position:absolute;left:418.6px;top:210.5px;width:13.4px;height:1.5px;background:#9a9a9a"></div>
<div class="t" style="left:531.00px;top:188.00px;font-size:19px;color:#9a9a9a;font-weight:400;transform:scaleX(0.9981);">AV</div>
<div class="t" style="left:594.60px;top:193.00px;font-size:20px;color:#9a9a9a;font-weight:400;transform:scaleX(0.9754);">Aa</div>
<div class="t" style="left:1148.04px;top:183.00px;font-size:19px;color:#2a2a2a;font-weight:400;transform:scaleX(0.8841);">Shapes</div>
<div class="t" style="left:1215.40px;top:183.00px;font-size:19px;color:#2a2a2a;font-weight:400;transform:scaleX(0.9387);">Arrange</div>
<div class="t" style="left:1297.02px;top:183.00px;font-size:19px;color:#b0b0b0;font-weight:400;transform:scaleX(0.9163);">Quick</div>
<div class="t" style="left:1288.47px;top:207.00px;font-size:19px;color:#b0b0b0;font-weight:400;transform:scaleX(0.8576);">Styles</div>
<div class="t" style="left:1440.65px;top:180.00px;font-size:19px;color:#2a2a2a;font-weight:400;transform:scaleX(0.9568);">Editing</div>
<div class="t" style="left:55.37px;top:286.00px;font-size:19px;color:#2a2a2a;font-weight:400;transform:scaleX(0.9415);">From Beginning</div>
<div class="t" style="left:237.57px;top:286.00px;font-size:19px;color:#2a2a2a;font-weight:400;transform:scaleX(0.9692);">Open</div>
<div class="t" style="left:337.50px;top:286.00px;font-size:19px;color:#2a2a2a;font-weight:400;transform:scaleX(0.9214);">New</div>
<div class="t" style="left:428.31px;top:286.00px;font-size:19px;color:#2a2a2a;font-weight:400;transform:scaleX(0.9786);">Undo</div>
<div class="t" style="left:542.76px;top:286.00px;font-size:19px;color:#2a2a2a;font-weight:400;transform:scaleX(0.8652);">Save</div>
<div class="t" style="left:635.21px;top:286.00px;font-size:19px;color:#a6a6a6;font-weight:400;transform:scaleX(0.9135);">Redo</div>
<div class="t" style="left:19.44px;top:464.00px;font-size:23px;color:#3a3a3a;font-weight:400;transform:scaleX(1.0129);">2</div>
<div class="t" style="left:12.29px;top:995.00px;font-size:16px;color:#333;font-weight:400;transform:scaleX(0.9888);">Slide 1 of 2</div>
<div class="t" style="left:164.65px;top:995.00px;font-size:16px;color:#333;font-weight:400;transform:scaleX(0.9767);">English (Nigeria)</div>
<div class="t" style="left:329.10px;top:995.00px;font-size:16px;color:#333;font-weight:400;transform:scaleX(0.9586);">Accessibility: Investigate</div>
<div class="t" style="left:1498.97px;top:995.00px;font-size:16px;color:#333;font-weight:400;transform:scaleX(0.9805);">59%</div>
<div class="t" style="left:383.5px;top:192px;font-size:21px;color:#9a9a9a;font-family:'Liberation Serif';font-style:italic">I</div>
<div class="t" style="left:863.84px;top:140.00px;font-size:9px;color:#a8a8a8;font-weight:400;transform:scaleX(1.1239);">1</div>
<div class="t" style="left:864.12px;top:150.00px;font-size:9px;color:#a8a8a8;font-weight:400;transform:scaleX(1.0745);">2</div>
<div class="t" style="left:864.23px;top:159.00px;font-size:9px;color:#a8a8a8;font-weight:400;transform:scaleX(1.0292);">3</div>
</body></html>
